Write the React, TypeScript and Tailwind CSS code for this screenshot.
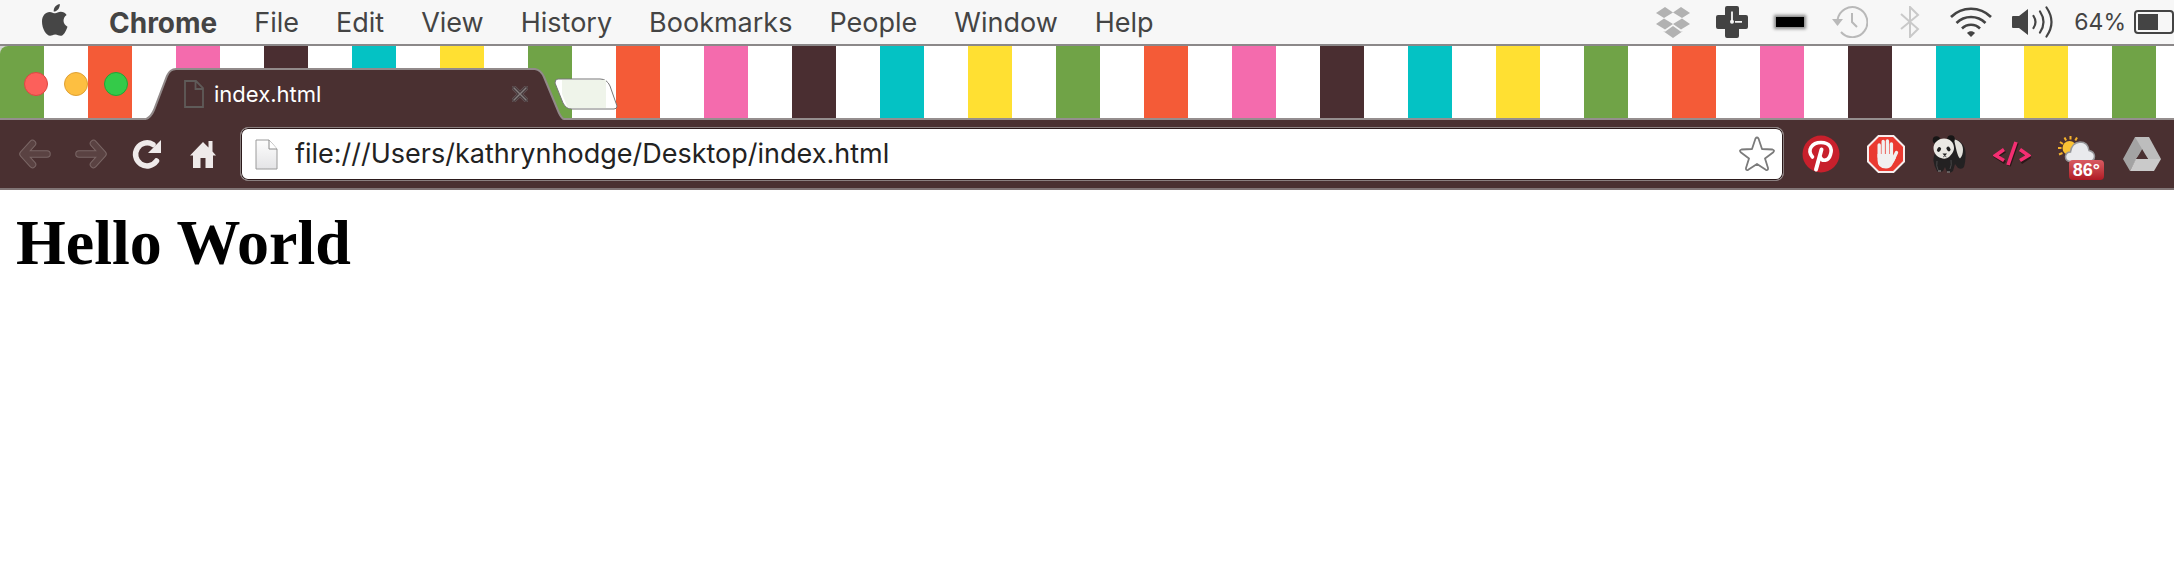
import type { ReactNode } from "react";

const menus = ["File", "Edit", "View", "History", "Bookmarks", "People", "Window", "Help"];

function Apple() {
  return (
    <svg className="mb-1 h-8 w-[26px]" viewBox="0 0 26 30.5" preserveAspectRatio="none" fill="#464646">
      <path d="M17.8 0c.2 2.2-.7 4-1.8 5.200-1.200 1.300-2.800 2.100-4.300 2-.2-2.100.7-3.800 1.800-5C14.600 1 16.400.1 17.800 0Z" />
      <path d="M13.200 8.900c1.400 0 3.200-1.400 5.600-1.400 2.300 0 4.400 1.100 5.800 3.100-4.500 2.800-3.900 9 .9 11-1.700 4.600-4.100 8.700-7 8.700-1.900 0-2.800-1.200-5.200-1.200-2.500 0-3.400 1.200-5.200 1.200C4.500 30.300 0 23.600 0 16.900 0 11 3.700 7.600 7.600 7.600c2.300 0 4.100 1.300 5.600 1.300Z" />
    </svg>
  );
}

function Dropbox() {
  return (
    <svg className="h-8 w-[34px]" viewBox="0 0 34 32" fill="#b2b2b2">
      <path d="M9 1 17 6.500 8 12 0 7ZM25 1 34 7 26 12 17 6.500ZM8 12.500 17 18l-8 5.500L0 18ZM26 12.500 34 18l-9 5.500L17 18Z" />
      <path d="m7 25 2 .8 8-5.800 8 5.800 2-.8-10 7Z" />
    </svg>
  );
}

function CrossClock() {
  return (
    <svg className="size-8" viewBox="0 0 32 32">
      <path d="M11 1h10q1 0 1 1v8h8q1 0 1 1v10q0 1-1 1h-8v8q0 1-1 1H11q-1 0-1-1v-8H2q-1 0-1-1V11q0-1 1-1h8V2q0-1 1-1Z" fill="#434343" stroke="#434343" strokeWidth="2" />
      <path d="M16 5.500v10M19 15.800h7" stroke="#f7f7f7" strokeWidth="1.800" fill="none" />
      <circle cx="16" cy="15.800" r="2" fill="#f7f7f7" />
    </svg>
  );
}

function TimeMachine() {
  return (
    <svg className="h-8 w-9" viewBox="0 0 36 32" fill="none" stroke="#b9b9b9" strokeWidth="2">
      <path d="M5.500 14A15 15 0 1 1 9 26" />
      <path d="M20 7v9l5 5" />
      <path d="M0 13h11l-5.500 7Z" fill="#b9b9b9" stroke="none" />
    </svg>
  );
}

function Bluetooth() {
  return (
    <svg className="h-8 w-5" viewBox="0 0 20 32" fill="none" stroke="#c9c9c9" strokeWidth="2">
      <path d="M1 8l17 15-8 8V1l8 8L1 23" />
    </svg>
  );
}

function Wifi() {
  return (
    <svg className="h-8 w-[42px]" viewBox="0 0 42 32" fill="none" stroke="#444" strokeWidth="2.600">
      <path d="M1 11C12 0 30 0 41 11M6.500 17c8-8 21-8 29 0M12 22.500c5-5 13-5 18 0" />
      <path d="M17 27c2-2.500 6-2.500 8 0l-4 4Z" fill="#444" stroke="none" />
    </svg>
  );
}

function Volume() {
  return (
    <svg className="h-8 w-[42px]" viewBox="0 0 42 32" fill="none" stroke="#444" strokeWidth="2.200" strokeLinecap="round">
      <path d="M0 11q0-1 1-1h6l9-7v26l-9-7H1q-1 0-1-1Z" fill="#444" stroke="none" />
      <path d="M21.500 10q4 6 0 12M28 5.500q7 10.500 0 21M34.500 1.500q10 14.500 0 29" />
    </svg>
  );
}

function Battery() {
  return (
    <svg className="h-6 w-10" viewBox="0 0 40 24">
      <rect x="1" y="1" width="38" height="22" rx="3" fill="none" stroke="#444" strokeWidth="2" />
      <rect x="4" y="4" width="20" height="16" fill="#444" />
    </svg>
  );
}

function PageIcon({ dark = false }: { dark?: boolean }) {
  return dark ? (
    <svg className="h-7 w-5" viewBox="0 0 20 28" fill="none" stroke="#5f5b59" strokeWidth="1.800">
      <path d="M1 1h11l7 7v19H1ZM11.500 1v8H19" />
    </svg>
  ) : (
    <svg className="h-[31px] w-6" viewBox="0 0 24 31">
      <defs>
        <linearGradient id="paper" x2="0" y2="1">
          <stop stopColor="#fdfdfd" />
          <stop offset="1" stopColor="#e4e4e6" />
        </linearGradient>
      </defs>
      <path d="M1 1h13l8 9v20H1Z" fill="url(#paper)" stroke="#9a9a9a" />
      <path d="M14 1v9h8" fill="#fff" stroke="#8a8a8a" />
    </svg>
  );
}

function Arrow({ right = false }: { right?: boolean }) {
  return (
    <svg className="size-8" viewBox="0 0 32 32" fill="none" strokeLinecap="round" strokeLinejoin="round">
      <g transform={right ? "translate(32 0) scale(-1 1)" : undefined}>
        <path d="M13.500 5.500 4 16l9.500 10.500M5 16h23" stroke="#7a6665" strokeWidth="7.500" />
        <path d="M13.500 5.500 4 16l9.500 10.500M5 16h23" stroke="#5a4242" strokeWidth="5.500" />
      </g>
    </svg>
  );
}

function Reload() {
  return (
    <svg className="size-8" viewBox="-1 0 32 32">
      <path d="M24.500 23A11.500 11.500 0 1 1 21 6.500" fill="none" stroke="#efeaea" strokeWidth="5.500" strokeLinecap="round" />
      <path d="M29 2v13H16Z" fill="#efeaea" />
    </svg>
  );
}

function Home() {
  return (
    <svg className="size-8" viewBox="-3 0 32 32" fill="#efeaea">
      <path d="M13 4 0 17.500h3V30h7.500V20h5v10H23V17.500h3l-3.500-4V3h-4v6.500Z" />
    </svg>
  );
}

function Star() {
  return (
    <svg className="size-9" viewBox="0 0 36 36" fill="#fff" stroke="#7b7b7b" strokeWidth="1.800" strokeLinejoin="round">
      <path d="M16.500 2.500q1.500-2 3 0L23 13l10.500.5q2.500.8.800 2.700L26 22.500 29 32q.3 2.800-2.200 1.800L18 28l-8.800 5.800Q6.700 34.800 7 32l3-9.500-8.300-6.300q-1.700-1.900.8-2.700L13 13Z" />
    </svg>
  );
}

function Pinterest() {
  return (
    <svg className="size-[38px]" viewBox="0 0 38 38" fill="none" stroke="#fff" strokeLinecap="round">
      <circle cx="19" cy="19" r="18.500" fill="#c8202c" stroke="none" />
      <path d="M10.500 22C4.500 15 10 7.500 19 7.500c9 0 11.500 6 9.500 12-2 7-8.500 7-10 3" strokeWidth="3.600" />
      <path d="M19.500 14.500 14 34.500" strokeWidth="4" />
    </svg>
  );
}

function StopHand() {
  return (
    <svg className="size-[38px]" viewBox="0 0 38 38">
      <path d="M11.500 1h15L37 11.500v15L26.500 37h-15L1 26.500v-15Z" fill="#ea3a31" stroke="#f6eeee" strokeWidth="2" />
      <g stroke="#f1f0f0" strokeWidth="3.400" strokeLinecap="round" fill="none">
        <path d="M12.200 22V10M16.200 20V6.500M20.400 20V6M24.400 22V9M25.500 26l4-8.500" />
      </g>
      <path d="M10.500 19h15.600v4.500l3-1-3.600 7q-2 4-6.500 4-8.500 0-8.500-8.500Z" fill="#f1f0f0" />
    </svg>
  );
}

function Panda() {
  return (
    <svg className="h-[38px] w-[34px]" viewBox="0 0 34 38">
      <path d="M20 4c8 0 13 6 13.500 13 .3 6-.5 12-1.500 15q-2 3-6 1l-3-4-2 7q-3 3-6 1l-2-5-2 4q-4 2-6 0-3-5-3.500-10Q1 20 4 17Z" fill="#232122" />
      <path d="M22 4.500c5 .5 9 4.500 9 10 0 4-1 7-3 9-3-3-4-11-6-19Z" fill="#e3e1db" />
      <circle cx="4.500" cy="5" r="3.800" fill="#171616" />
      <circle cx="19" cy="4" r="3.800" fill="#171616" />
      <path d="M12 3.500c6 0 10 4 10 9.500 0 4-3 7-5 9q-4 3-8 1c-4-1-7.500-5-7.500-10S6 3.500 12 3.500Z" fill="#ebe9e4" />
      <ellipse cx="7" cy="14.500" rx="1.800" ry="2.500" fill="#222" transform="rotate(35 7 14.500)" />
      <ellipse cx="16.500" cy="14" rx="1.800" ry="2.500" fill="#222" transform="rotate(-35 16.500 14)" />
      <path d="M10.500 18.500h4.500l-2.200 2.800Z" fill="#222" />
      <path d="m11 22 1.800-1 1.700 1" stroke="#666" fill="none" />
      <path d="M5 26q-1 5 1 9M19 25q1 5-1 9" stroke="#4a4849" fill="none" />
      <path d="M6 36h3M15 37h3" stroke="#9a9796" />
    </svg>
  );
}

function Code() {
  return (
    <svg className="h-[26px] w-[38px]" viewBox="0 0 38 26" fill="none" strokeWidth="3.600">
      <path d="m11 9-9 5.500 9 6M27 9l9 5.500-9 6M23 1l-8 23" stroke="#2a1718" transform="translate(1 1)" />
      <path d="m11 8.500-8.500 6 8.500 5M27 8.500l8.500 6-8.500 5M23 1l-8 23" stroke="#f42e72" />
    </svg>
  );
}

function Weather() {
  return (
    <svg className="mt-1 h-[28px] w-[38px]" viewBox="0 0 38 28">
      <path d="M12.500 0v3.500M6.500 1.500l1.600 3M2 6l3 2M0 12h3.500M1 18.500l3.500-1.500M19 1.500l-1.700 3" stroke="#f5b22c" strokeWidth="2" />
      <circle cx="11.500" cy="12" r="7" fill="#fbc334" />
      <path d="M12 25.500q-4.500-.5-4.500-5 .5-4.500 5-4.500 1-9 9.500-10 8 0 9 8.500 5 1 5.500 5.500 0 5-5 5.500Z" fill="#e9eaed" stroke="#96969a" strokeWidth="1.500" />
    </svg>
  );
}

function Drive() {
  return (
    <svg className="h-[34px] w-[38px]" viewBox="0 0 38 34">
      <path d="M12 0h14L13 23 7 34 0 22Z" fill="#a3a3a3" />
      <path d="M12 0h14l12 22H25Z" fill="#bdbdbd" />
      <path d="M13 22h25l-7 12H7Z" fill="#cacaca" />
      <path d="m19 14 6 8H13Z" fill="#4a3031" />
    </svg>
  );
}

function ToolButton({ label, children }: { label: string; children: ReactNode }) {
  return (
    <button aria-label={label} className="flex shrink-0 items-center justify-center">
      {children}
    </button>
  );
}

function MenuBar() {
  return (
    <header className="flex h-[44px] items-center justify-between bg-[#f7f7f7] pl-[42px] text-[27px] leading-8 text-[#444]">
      <nav className="flex items-center gap-[37px]">
        <ToolButton label="Apple menu"><Apple /></ToolButton>
        <button className="ml-1 pt-0.5 text-[28px] font-bold">Chrome</button>
        {menus.map((m) => <button key={m} className="pt-0.5">{m}</button>)}
      </nav>
      <div className="flex items-center">
        <div className="flex items-center gap-[26px]">
          <Dropbox />
          <CrossClock />
          <span className="mx-0.5 h-2.5 w-7 bg-black shadow-[0_0_3px_2px_#888]" />
          <TimeMachine />
        </div>
        <div className="ml-8 flex items-center gap-5">
          <div className="flex items-center gap-[30px]">
            <Bluetooth />
            <Wifi />
          </div>
          <Volume />
        </div>
        <span className="ml-5 mr-2 text-[23px]">64%</span>
        <Battery />
      </div>
    </header>
  );
}

function TabStrip() {
  return (
    <div className="h-[76px] border-t-2 border-[#8b8889] bg-[#d5d5d5]">
      <div className="flex h-full rounded-tl-lg bg-[repeating-linear-gradient(90deg,#70a347_0_44px,#fff_44px_88px,#f45b37_88px_132px,#fff_132px_176px,#f46bad_176px_220px,#fff_220px_264px,#4a2e31_264px_308px,#fff_308px_352px,#04c2c4_352px_396px,#fff_396px_440px,#ffe032_440px_484px,#fff_484px_528px)]">
        <div className="flex w-[146px] shrink-0 gap-4 border-b-2 border-[#958e8e] pl-6 pt-[26px]">
          <button aria-label="Close window" className="size-6 rounded-full border border-[#dc4743] bg-[#fc605b]" />
          <button aria-label="Minimise window" className="size-6 rounded-full border border-[#dfa034] bg-[#fdbf41]" />
          <button aria-label="Zoom window" className="size-6 rounded-full border border-[#22a436] bg-[#34ca49]" />
        </div>
        <div className="relative flex w-[418px] shrink-0 items-center pl-[38px] pr-9 pt-[22px]">
          <svg className="absolute bottom-0 left-0 h-[52px] w-full" viewBox="0 0 418 52" preserveAspectRatio="none">
            <path d="M0 51Q5 49 8 42L21 8Q24 1 30 1H389Q395 2 398 9L413 45Q416 51 418 51V52H0Z" fill="#4a3031" />
            <path d="M0 51Q5 49 8 42L21 8Q24 1 30 1H389Q395 2 398 9L413 45Q416 51 418 51" fill="none" stroke="#928a8a" strokeWidth="2" />
          </svg>
          <div className="relative flex w-full items-center">
            <PageIcon dark />
            <span className="ml-[10px] flex-1 text-[22px] leading-7 text-white">index.html</span>
            <button aria-label="Close tab">
              <svg className="size-4" viewBox="0 0 16 16" strokeLinecap="round">
                <path d="m2 2 12 12M14 2 2 14" stroke="#665658" strokeWidth="5" />
                <path d="m2 2 12 12M14 2 2 14" stroke="#45383a" strokeWidth="3.400" />
                <path d="m2 2 12 12M14 2 2 14" stroke="#857d7d" strokeWidth="1.400" />
              </svg>
            </button>
          </div>
        </div>
        <div className="flex-1 border-b-2 border-[#958e8e] pt-8">
          <button aria-label="New tab" className="-ml-[10px] block">
            <svg className="h-8 w-16" viewBox="0 0 64 32">
              <path d="M4 1H46Q53 1 56 8L63 28Q63 31 60 31H18Q12 31 9 25L1 5Q1 1 4 1Z" fill="#fff" stroke="#777" />
              <path d="M8 2h44v28H14L8 16Z" fill="#eff4ea" />
            </svg>
          </button>
        </div>
      </div>
    </div>
  );
}

function Toolbar() {
  return (
    <div className="flex h-[70px] items-center border-b-2 border-[#817576] bg-[#4a3031] pl-[19px] pr-[13px]">
      <div className="flex shrink-0 items-center gap-6">
        <ToolButton label="Back"><Arrow /></ToolButton>
        <ToolButton label="Forward"><Arrow right /></ToolButton>
        <ToolButton label="Reload"><Reload /></ToolButton>
        <ToolButton label="Home"><Home /></ToolButton>
      </div>
      <div className="ml-[21px] flex h-[54px] min-w-0 flex-1 items-center rounded-lg border border-[#8b8080] bg-white pl-[14px] pr-2 ring-1 ring-inset ring-[#2b1a1b]">
        <PageIcon />
        <input
          aria-label="Address"
          className="ml-4 min-w-0 flex-1 bg-transparent text-[27px] text-[#222] outline-none"
          defaultValue="file:///Users/kathrynhodge/Desktop/index.html"
        />
        <ToolButton label="Bookmark this page"><Star /></ToolButton>
      </div>
      <div className="ml-[18px] flex shrink-0 items-center gap-[27px]">
        <ToolButton label="Pinterest"><Pinterest /></ToolButton>
        <ToolButton label="Ad blocker"><StopHand /></ToolButton>
        <ToolButton label="Panda"><Panda /></ToolButton>
        <ToolButton label="Source"><Code /></ToolButton>
        <button aria-label="Weather" className="relative flex h-11 shrink-0">
          <Weather />
          <span className="absolute -bottom-1 -right-2 rounded-sm bg-linear-to-b from-[#d85a62] to-[#b01824] px-1 font-['Liberation_Sans',sans-serif] text-[18px] font-bold leading-5 text-white">86°</span>
        </button>
        <ToolButton label="Drive"><Drive /></ToolButton>
      </div>
    </div>
  );
}

export default function App() {
  return (
    <div className="min-h-screen bg-white font-['Inter','Liberation_Sans',sans-serif]">
      <MenuBar />
      <TabStrip />
      <Toolbar />
      <main className="px-4 pt-4">
        <h1 className="font-['Liberation_Serif',serif] text-[64px] font-bold leading-[74px] text-black">Hello World</h1>
      </main>
    </div>
  );
}
